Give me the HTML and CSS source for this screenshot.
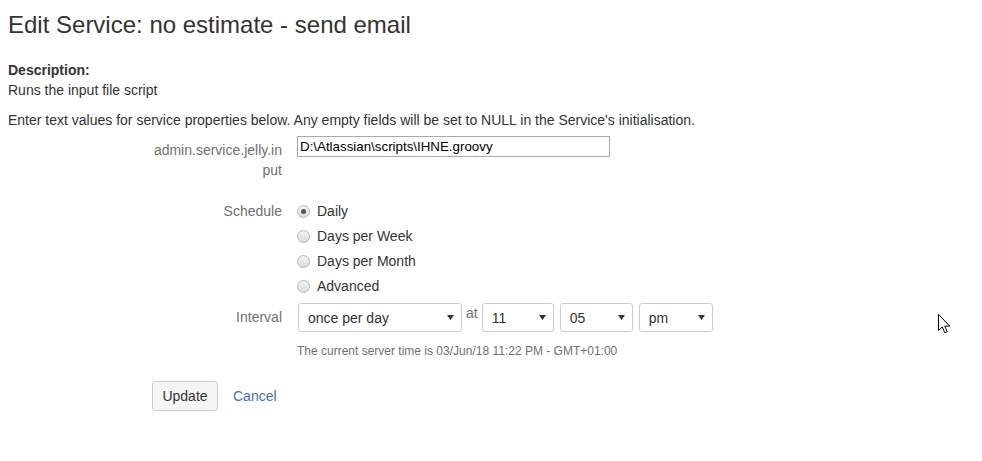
FILE: index.html
```html
<!DOCTYPE html>
<html>
<head>
<meta charset="utf-8">
<title>Edit Service</title>
<link rel="stylesheet" href="styles.css">
</head>
<body>
<div class="page">
  <h1 class="title">Edit Service: no estimate - send email</h1>
  <div class="desc">
    <div class="desc-label">Description:</div>
    <div>Runs the input file script</div>
  </div>
  <p class="intro">Enter text values for service properties below. Any empty fields will be set to NULL in the Service's initialisation.</p>

  <form class="form">
    <div class="row row-input">
      <label class="label label-wrap">admin.service.jelly.in put</label>
      <div class="field">
        <input class="text" type="text" value="D:\Atlassian\scripts\IHNE.groovy">
      </div>
    </div>

    <div class="row row-schedule">
      <div class="label label-sched">Schedule</div>
      <div class="field radios">
        <div class="radio-item"><span class="radio checked"></span><span>Daily</span></div>
        <div class="radio-item"><span class="radio"></span><span>Days per Week</span></div>
        <div class="radio-item"><span class="radio"></span><span>Days per Month</span></div>
        <div class="radio-item"><span class="radio"></span><span>Advanced</span></div>
      </div>
    </div>

    <div class="row row-interval">
      <div class="label label-int">Interval</div>
      <div class="field">
        <div class="selects">
          <div class="select sel-freq"><span>once per day</span><svg class="arrow" width="7" height="5" viewBox="0 0 7 5"><path d="M0 0H7L3.5 5Z" fill="#333"/></svg></div>
          <span class="at">at</span>
          <div class="select sel-hour"><span>11</span><svg class="arrow" width="7" height="5" viewBox="0 0 7 5"><path d="M0 0H7L3.5 5Z" fill="#333"/></svg></div>
          <div class="select sel-min"><span>05</span><svg class="arrow" width="7" height="5" viewBox="0 0 7 5"><path d="M0 0H7L3.5 5Z" fill="#333"/></svg></div>
          <div class="select sel-ampm"><span>pm</span><svg class="arrow" width="7" height="5" viewBox="0 0 7 5"><path d="M0 0H7L3.5 5Z" fill="#333"/></svg></div>
        </div>
        <div class="hint">The current server time is 03/Jun/18 11:22 PM - GMT+01:00</div>
      </div>
    </div>

    <div class="buttons">
      <button type="button" class="btn">Update</button>
      <a class="cancel" href="#">Cancel</a>
    </div>
  </form>

  <svg class="cursor" width="13" height="20" viewBox="0 0 13 20">
    <path d="M0.5 0.5V16.5L4.3 12.9L6.8 18.8L9.2 17.8L6.8 12.1H11.8Z" fill="#fff" stroke="#000" stroke-width="1" stroke-linejoin="miter"/>
  </svg>
</div>
</body>
</html>
```

FILE: styles.css
```css
* { box-sizing: border-box; }
html, body { margin: 0; padding: 0; background: #fff; }
body {
  font-family: "Liberation Sans", Arial, sans-serif;
  font-size: 14px;
  line-height: 20px;
  color: #333;
}
.page {
  position: relative;
  padding: 10px 8px 0 8px;
  height: 461px;
}
.title {
  margin: 0;
  font-size: 24px;
  line-height: 30px;
  font-weight: normal;
  color: #333;
}
.desc { margin-top: 20px; }
.desc-label { font-weight: bold; }
.intro { margin: 10px 0 0 0; }

.form { margin-top: 6px; padding-left: 144px; }
.row {
  display: grid;
  grid-template-columns: 130px 1fr;
  column-gap: 15px;
}
.label {
  text-align: right;
  color: #707070;
}
.label-wrap {
  padding-top: 4px;
  word-break: break-all;
}
.text {
  display: block;
  width: 313px;
  height: 21px;
  margin: 0;
  padding: 0 2px;
  border: 1px solid #a9a9a9;
  font-family: "Liberation Sans", Arial, sans-serif;
  font-size: 13.33px;
  color: #000;
  background: #fff;
  outline: none;
}
.row-schedule { margin-top: 19px; }
.label-sched { line-height: 25px; }
.radios { display: flex; flex-direction: column; }
.radio-item {
  display: flex;
  align-items: center;
  height: 25px;
  line-height: 25px;
  color: #333;
}
.radio {
  width: 13px;
  height: 13px;
  border-radius: 50%;
  border: 1px solid #b8b8b8;
  background: linear-gradient(#f3f3f3, #dcdcdc);
  margin-right: 7px;
  display: flex;
  align-items: center;
  justify-content: center;
}
.radio.checked::after {
  content: "";
  width: 5px;
  height: 5px;
  border-radius: 50%;
  background: #555;
}

.row-interval { margin-top: 4px; }
.label-int { line-height: 29px; }
.selects {
  display: flex;
  align-items: flex-start;
}
.select {
  display: flex;
  align-items: center;
  justify-content: space-between;
  height: 29px;
  padding: 0 7px 0 9px;
  border: 1px solid #ccc;
  border-radius: 3px;
  background: #fff;
  color: #333;
}
.sel-freq { width: 164px; margin-left: 1px; }
.sel-hour { width: 72px; margin-left: 4px; }
.sel-min { width: 73px; margin-left: 6px; }
.sel-ampm { width: 74px; margin-left: 6px; }
.arrow { display: block; }
.at {
  margin-left: 4px;
  line-height: 20px;
  color: #707070;
}
.hint {
  margin-top: 11px;
  font-size: 12px;
  line-height: 16px;
  color: #707070;
}

.buttons {
  display: flex;
  align-items: center;
  margin-top: 22px;
}
.btn {
  height: 30px;
  width: 66px;
  padding: 0;
  font-family: "Liberation Sans", Arial, sans-serif;
  font-size: 14px;
  color: #333;
  background: #f5f5f5;
  border: 1px solid #ccc;
  border-radius: 3px;
}
.cancel {
  margin-left: 15px;
  color: #3b73af;
  text-decoration: none;
}
.cursor {
  position: absolute;
  left: 938px;
  top: 314px;
}
```
